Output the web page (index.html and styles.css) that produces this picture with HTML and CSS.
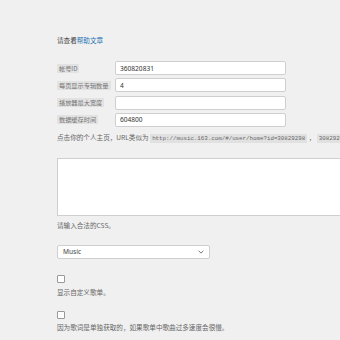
FILE: index.html
```html
<!DOCTYPE html>
<html lang="zh-CN">
<head>
<meta charset="utf-8">
<title>设置</title>
<link rel="stylesheet" href="styles.css">
</head>
<body>
<div class="page">
  <p class="intro">请查看<a href="#" class="link">帮助文章</a></p>
  <div class="fields">
    <span class="label">帐号ID</span>
    <input class="input" type="text" value="360820831">
    <span class="label">每页显示专辑数量</span>
    <input class="input" type="text" value="4">
    <span class="label">播放器最大宽度</span>
    <input class="input" type="text" value="">
    <span class="label">数据缓存时间</span>
    <input class="input" type="text" value="604800">
  </div>
  <p class="desc nowrap">点击你的个人主页，URL类似为 <code class="code">http://music.163.com/#/user/home?id=30829298</code> ， <code class="code">30829298</code> 就是你的ID。</p>
  <textarea class="area"></textarea>
  <p class="desc after-area">请输入合法的CSS。</p>
  <div class="select">
    <span>Music</span>
    <svg class="chev" width="6" height="4" viewBox="0 0 6 4"><path d="M0.6 0.8 L3 3.1 L5.4 0.8" fill="none" stroke="#666" stroke-width="0.9"/></svg>
  </div>
  <span class="check check-1"></span>
  <p class="desc after-check">显示自定义歌单。</p>
  <span class="check check-2"></span>
  <p class="desc after-check2">因为歌词是单独获取的，如果歌单中歌曲过多速度会很慢。</p>
</div>
</body>
</html>
```

FILE: styles.css
```css
html, body {
  margin: 0;
  padding: 0;
  background: #f0f0f0;
  overflow: hidden;
}
body {
  width: 340px;
  height: 340px;
  font-family: "Noto Sans CJK SC", "Noto Sans", sans-serif;
  font-size: 6.6px;
  color: #555;
}
.page {
  padding: 35px 0 0 57px;
  display: flex;
  flex-direction: column;
  align-items: flex-start;
}
.intro {
  margin: 0;
  line-height: 10px;
  color: #444;
}
.link {
  color: #2271b1;
  text-decoration: none;
}
.fields {
  margin-top: 16px;
  display: grid;
  grid-template-columns: 58px 171px;
  grid-auto-rows: 14px;
  row-gap: 3.3px;
  align-items: center;
}
.label {
  justify-self: start;
  background: #e2e2e2;
  color: #777;
  font-size: 6.2px;
  line-height: 9px;
  height: 9px;
  padding: 0 2px;
  white-space: nowrap;
}
.input {
  box-sizing: border-box;
  width: 171px;
  height: 14px;
  margin: 0;
  border: 1px solid #cfcfcf;
  border-radius: 2px;
  background: #fff;
  padding: 0 4px;
  font-family: "Noto Sans", sans-serif;
  font-size: 6.6px;
  color: #333;
  outline: none;
}
.desc {
  margin: 5px 0 0 0;
  line-height: 10px;
  color: #666;
}
.nowrap {
  white-space: nowrap;
}
.code {
  font-family: "Liberation Mono", "DejaVu Sans Mono", monospace;
  font-size: 5.8px;
  background: #e1e1e1;
  color: #666;
  padding: 1px 2px;
}
.area {
  box-sizing: border-box;
  margin: 14px 0 0 0;
  width: 300px;
  height: 58px;
  border: 1px solid #cfcfcf;
  border-radius: 0;
  background: #fff;
  resize: none;
  outline: none;
}
.after-area {
  margin-top: 4px;
}
.select {
  box-sizing: border-box;
  margin-top: 15px;
  width: 153px;
  height: 14px;
  border: 1px solid #cfcfcf;
  border-radius: 2px;
  background: #fff;
  display: flex;
  align-items: center;
  justify-content: space-between;
  padding: 0 5px 0 5px;
  font-family: "Noto Sans", sans-serif;
  font-size: 6.6px;
  color: #444;
}
.chev {
  display: block;
}
.check {
  box-sizing: border-box;
  display: block;
  width: 8px;
  height: 8px;
  border: 1px solid #999;
  border-radius: 1px;
  background: #fff;
}
.check-1 {
  margin-top: 16px;
}
.check-2 {
  margin-top: 14px;
}
.after-check {
  margin-top: 4px;
}
.after-check2 {
  margin-top: 3px;
}
```
